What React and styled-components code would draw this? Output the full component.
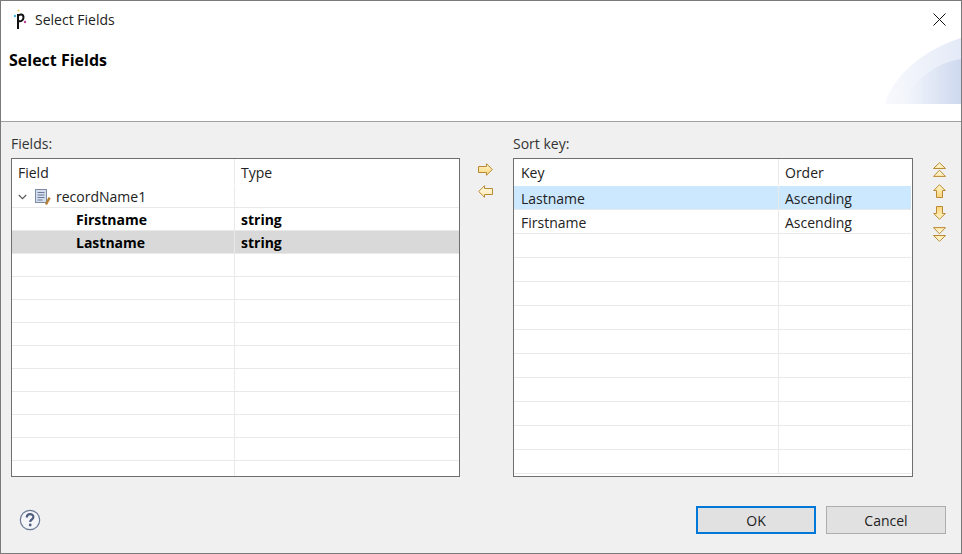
import React from 'react'
import styled, { createGlobalStyle } from 'styled-components'

const GlobalStyle = createGlobalStyle`
  html, body { margin: 0; padding: 0; background: #f0f0f0; }
  body { font-family: "Open Sans", "Noto Sans", sans-serif; color: #1a1a1a; }
`

const Dialog = styled.div`
  width: 962px;
  height: 554px;
  box-sizing: border-box;
  border: 1px solid #7a7a7a;
  display: flex;
  flex-direction: column;
  background: #f0f0f0;
  overflow: hidden;
`
const Banner = styled.div`
  position: relative;
  height: 120px;
  flex: none;
  background: #fff;
  border-bottom: 1px solid #a0a0a0;
`
const TitleBar = styled.div`
  height: 36px;
  display: flex;
  align-items: center;
  padding-left: 11px;
  gap: 8px;
  font-size: 14px;
  color: #222;
`
const Heading = styled.h1`
  margin: 0;
  padding: 12px 0 0 8px;
  font-size: 16px;
  line-height: 22px;
  font-weight: 700;
  color: #000;
`
const CloseButton = styled.svg`
  position: absolute;
  top: 12px;
  right: 15px;
`
const Swoosh = styled.svg`
  position: absolute;
  right: 0;
  top: 36px;
`
const Body = styled.div`
  flex: 1;
  display: flex;
  flex-direction: column;
  padding: 12px 15px 19px 10px;
`
const Panels = styled.div`
  display: grid;
  grid-template-columns: 449px 53px 400px 33px;
  height: 343px;
`
const Column = styled.div`
  display: flex;
  flex-direction: column;
`
const Label = styled.div`
  font-size: 14px;
  line-height: 18px;
  height: 18px;
  margin: 1px 0 5px;
  color: #333;
`
const TableBox = styled.div`
  box-sizing: border-box;
  height: 319px;
  border: 1px solid #6f6f6f;
  background: #fff;
  overflow: hidden;
`
const Row = styled.div`
  display: grid;
  grid-template-columns: ${p => p.$cols};
  box-sizing: border-box;
  height: ${p => p.$h}px;
  margin-right: ${p => p.$inset || 0}px;
  background: ${p => p.$bg || 'transparent'};
  border-bottom: 1px solid ${p => p.$noline ? 'transparent' : '#e9e9e9'};
`
const Cell = styled.div`
  display: flex;
  align-items: center;
  padding-left: ${p => p.$pad || 6}px;
  padding-top: ${p => p.$top || 0}px;
  font-size: 14px;
  font-weight: ${p => p.$bold ? 700 : 400};
  color: ${p => p.$bold ? '#000' : '#222'};
  white-space: nowrap;
  & + & { border-left: 1px solid #e9e9e9; }
`
const ArrowStack = styled.div`
  display: flex;
  flex-direction: column;
  align-items: center;
  gap: 9px;
  padding-top: 29px;
  margin-left: -3px;
`
const SortStack = styled.div`
  display: grid;
  grid-template-rows: 22px 22px 21px auto;
  align-content: start;
  padding-top: 28px;
  margin-left: 20px;
`
const Footer = styled.div`
  display: flex;
  align-items: center;
  margin-top: 29px;
  padding-left: 8px;
`
const HelpIcon = styled.svg`
  flex: none;
`
const Buttons = styled.div`
  margin-left: auto;
  display: flex;
  gap: 10px;
`
const Button = styled.button`
  width: 120px;
  height: 28px;
  box-sizing: border-box;
  padding: 0;
  background: #e1e1e1;
  border: ${p => p.$primary ? '2px solid #0078d7' : '1px solid #adadad'};
  font-family: inherit;
  font-size: 14px;
  color: #222;
`
const Flipped = styled.svg`
  display: block;
  transform: ${p => p.$flip || 'none'};
`
const RecordGlyph = styled.svg`
  flex: none;
  margin: 0 4px 0 8px;
`
const Chevron = styled.svg`
  flex: none;
`

const AppIcon = () => (
  <svg width="15" height="20" viewBox="0 0 15 20">
    <circle cx="3" cy="7" r="1.2" fill="#3fb6d8" />
    <circle cx="6.5" cy="1.5" r="1" fill="#e8c34a" />
    <circle cx="13" cy="13" r="1.2" fill="#c0409a" />
    <path d="M6 5V20M6 7c2-2.500 5.500-2 5.500 1.500S8 13 6 11.500" fill="none" stroke="#111" strokeWidth="2" />
  </svg>
)

const RecordIcon = () => (
  <RecordGlyph width="17" height="16" viewBox="0 0 17 16">
    <rect x="0.5" y="0.5" width="11" height="13" fill="#d5deee" stroke="#7d8ba3" />
    <path d="M2.5 3.5h7M2.5 6h7M2.5 8.5h7M2.5 11h5" stroke="#6b7a96" />
    <path d="M10 15l3.5-7 2.2 1.2-3.7 6.800z" fill="#b5802f" />
  </RecordGlyph>
)

const ChevronDown = () => (
  <Chevron width="9" height="6" viewBox="0 0 9 6">
    <path d="M0.8 1l3.7 3.7L8.2 1" fill="none" stroke="#555" strokeWidth="1.1" />
  </Chevron>
)

const edge = '#b98a35'

const ArrowFill = ({ id, light }) => (
  <defs>
    <linearGradient id={id} x1="0" x2="0" y1="0" y2="1">
      <stop offset="0" stopColor={light ? '#fffbe8' : '#fff6cc'} />
      <stop offset="1" stopColor={light ? '#ffe9ac' : '#fdd378'} />
    </linearGradient>
  </defs>
)

const MoveArrow = ({ id, left }) => (
  <Flipped width="15" height="13" viewBox="0 0 15 13" $flip={left ? 'scaleX(-1)' : undefined}>
    <ArrowFill id={id} light={left} />
    <path d="M0.5 3.5H8.5V0.7L14.3 6.5 8.5 12.3V9.5H0.5z" fill={`url(#${id})`} stroke={edge} strokeLinejoin="round" />
  </Flipped>
)

const UpArrow = ({ id, down }) => (
  <Flipped width="13" height="14" viewBox="0 0 13 14" $flip={down ? 'scaleY(-1)' : undefined}>
    <ArrowFill id={id} />
    <path d="M6.5 0.7L12.3 6.5H9.5v7h-6v-7H0.7z" fill={`url(#${id})`} stroke={edge} strokeLinejoin="round" />
  </Flipped>
)

const DoubleArrow = ({ id, down }) => (
  <Flipped width="13" height="15" viewBox="0 0 13 15" $flip={down ? 'scaleY(-1)' : undefined}>
    <ArrowFill id={id} light />
    <path d="M6.5 0.7L12.5 6.5H0.5z" fill={`url(#${id})`} stroke={edge} strokeLinejoin="round" />
    <path d="M6.5 8.2L12.5 14.4H0.5z" fill={`url(#${id})`} stroke={edge} strokeLinejoin="round" />
  </Flipped>
)

const fieldCols = '222px 1fr'
const keyCols = '264px 1fr'

const FieldRow = ({ name, type, selected }) => (
  <Row $cols={fieldCols} $h={23} $bg={selected ? '#d9d9d9' : undefined}>
    <Cell $pad={64} $bold>{name}</Cell>
    <Cell $bold>{type}</Cell>
  </Row>
)

const KeyRow = ({ name, order, selected }) => (
  <Row $cols={keyCols} $h={24} $inset={1} $bg={selected ? '#cce8ff' : undefined}>
    <Cell $pad={7} $top={1}>{name}</Cell>
    <Cell $top={1}>{order}</Cell>
  </Row>
)

const emptyFields = Array.from({ length: 10 })
const emptyKeys = Array.from({ length: 10 })

export default function App() {
  return (
    <Dialog>
      <GlobalStyle />
      <Banner>
        <TitleBar>
          <AppIcon />
          Select Fields
        </TitleBar>
        <Heading>Select Fields</Heading>
        <CloseButton width="13" height="13" viewBox="0 0 13 13">
          <path d="M0.5 0.5l12 12M12.5 0.5l-12 12" stroke="#111" strokeWidth="1" />
        </CloseButton>
        <Swoosh width="76" height="67" viewBox="0 0 76 67">
          <defs>
            <linearGradient id="sw1" x1="0" x2="1" y1="0" y2="0">
              <stop offset="0" stopColor="#f8f9fd" />
              <stop offset="1" stopColor="#e4eaf7" />
            </linearGradient>
            <linearGradient id="sw2" x1="0" x2="1" y1="0" y2="0">
              <stop offset="0" stopColor="#f6f8fc" />
              <stop offset="1" stopColor="#ced9ef" />
            </linearGradient>
          </defs>
          <path d="M0 67C8 38 40 12 76 1V67z" fill="url(#sw1)" />
          <path d="M16 67C28 44 50 26 76 22V67z" fill="url(#sw2)" />
        </Swoosh>
      </Banner>
      <Body>
        <Panels>
          <Column>
            <Label>Fields:</Label>
            <TableBox>
              <Row $cols={fieldCols} $h={27} $noline>
                <Cell>Field</Cell>
                <Cell>Type</Cell>
              </Row>
              <Row $cols={fieldCols} $h={22}>
                <Cell>
                  <ChevronDown />
                  <RecordIcon />
                  recordName1
                </Cell>
                <Cell />
              </Row>
              <FieldRow name="Firstname" type="string" />
              <FieldRow name="Lastname" type="string" selected />
              {emptyFields.map((_, i) => <FieldRow key={i} />)}
              <Row $cols={fieldCols} $h={23} $noline><Cell /><Cell /></Row>
            </TableBox>
          </Column>
          <ArrowStack>
            <MoveArrow id="add" />
            <MoveArrow id="remove" left />
          </ArrowStack>
          <Column>
            <Label>Sort key:</Label>
            <TableBox>
              <Row $cols={keyCols} $h={27} $inset={1} $noline>
                <Cell $pad={7}>Key</Cell>
                <Cell>Order</Cell>
              </Row>
              <KeyRow name="Lastname" order="Ascending" selected />
              <KeyRow name="Firstname" order="Ascending" />
              {emptyKeys.map((_, i) => <KeyRow key={i} />)}
            </TableBox>
          </Column>
          <SortStack>
            <DoubleArrow id="top" />
            <UpArrow id="up" />
            <UpArrow id="down" down />
            <DoubleArrow id="bottom" down />
          </SortStack>
        </Panels>
        <Footer>
          <HelpIcon width="22" height="22" viewBox="0 0 22 22">
            <circle cx="11" cy="11" r="9.7" fill="#f4f5f8" stroke="#6a7a96" strokeWidth="1.2" />
            <path d="M7.8 8.4c0-4.2 6.6-4.2 6.6-.4 0 2.6-3.2 2.4-3.2 5" fill="none" stroke="#4f5f7d" strokeWidth="2.2" />
            <circle cx="11.2" cy="16" r="1.4" fill="#4f5f7d" />
          </HelpIcon>
          <Buttons>
            <Button $primary>OK</Button>
            <Button>Cancel</Button>
          </Buttons>
        </Footer>
      </Body>
    </Dialog>
  )
}
